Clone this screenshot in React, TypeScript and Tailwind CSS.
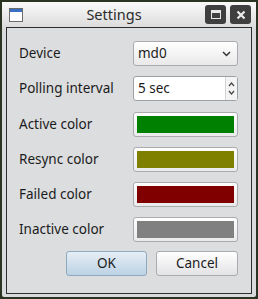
import React from 'react';

const font = { fontFamily: '"Noto Sans", "Open Sans", sans-serif' };

const swatches = [
  { label: 'Active color', color: 'bg-[#008000]' },
  { label: 'Resync color', color: 'bg-[#808000]' },
  { label: 'Failed color', color: 'bg-[#800000]' },
  { label: 'Inactive color', color: 'bg-[#808080]' },
];

const Row: React.FC<{ label: string; children: React.ReactNode; className?: string }> = ({ label, children, className }) => (
  <div className={`flex h-[25px] items-center justify-between ${className ?? ''}`}>
    <span className="text-[13.5px] text-[#1b1b1b]">{label}</span>
    {children}
  </div>
);

export default function App() {
  return (
    <div className="h-[299px] w-[258px] bg-[#2b3322] pl-[2px] pt-[2px]" style={font}>
      <div className="flex h-[295px] w-[254px] flex-col rounded-[2px] bg-[#d9dadc]">
        {/* title bar */}
        <div className="flex h-[25px] items-center bg-gradient-to-b from-[#fafafa] to-[#dcdcdc] pl-[7px] pr-[5px]">
          <div className="h-[14px] w-[14px] border border-[#6b6b6b] bg-white">
            <div className="h-[3px] bg-[#3a6fc4]" />
          </div>
          <span className="flex-1 text-center text-[14.5px] text-[#2a2a2a]">Settings</span>
          <div className="flex gap-[4px]">
            <div className="flex h-[19px] w-[21px] items-center justify-center rounded-[3px] bg-[#3f3f3f]">
              <div className="h-[9px] w-[10px] border-[1.5px] border-t-[3px] border-[#e8e8e8]" />
            </div>
            <div className="flex h-[19px] w-[21px] items-center justify-center rounded-[3px] bg-[#3f3f3f]">
              <svg width="10" height="10" viewBox="0 0 10 10">
                <path d="M1.5 1.5 L8.5 8.5 M8.5 1.5 L1.5 8.5" stroke="#ececec" strokeWidth="2.2" />
              </svg>
            </div>
          </div>
        </div>
        {/* content */}
        <div className="mx-[4px] mb-[3px] flex flex-1 flex-col border border-[#2e2e2e] bg-[#dcdddf] pl-[12px] pr-[13px] pt-[13px]">
          <Row label="Device">
            <div className="flex h-[25px] w-[105px] items-center justify-between rounded-[3px] border border-[#a9abae] bg-gradient-to-b from-white to-[#e9e9ea] pl-[4px] pr-[6px]">
              <span className="text-[13.5px] text-[#1b1b1b]">md0</span>
              <svg width="9" height="6" viewBox="0 0 9 6">
                <path d="M1 1 L4.5 4.5 L8 1" fill="none" stroke="#333" strokeWidth="1.5" />
              </svg>
            </div>
          </Row>
          <Row label="Polling interval" className="mt-[10px]">
            <div className="flex h-[25px] w-[105px] rounded-[3px] border border-[#9da0a4] bg-white">
              <span className="flex-1 pl-[4px] text-[13.5px] leading-[23px] text-[#1b1b1b]">5 sec</span>
              <div className="flex w-[12px] flex-col items-center justify-center gap-[3px] border-l border-[#d4d5d7] bg-[#f4f4f4]">
                <svg width="7" height="5" viewBox="0 0 7 5">
                  <path d="M1 4 L3.5 1 L6 4" fill="none" stroke="#444" strokeWidth="1.2" />
                </svg>
                <svg width="7" height="5" viewBox="0 0 7 5">
                  <path d="M1 1 L3.5 4 L6 1" fill="none" stroke="#444" strokeWidth="1.2" />
                </svg>
              </div>
            </div>
          </Row>
          {swatches.map((s, i) => (
            <Row key={s.label} label={s.label} className={i === 0 ? 'mt-[11px]' : 'mt-[10px]'}>
              <div className="flex h-[25px] w-[105px] rounded-[3px] border border-[#a9abae] bg-gradient-to-b from-white to-[#eaeaeb] p-[3px]">
                <div className={`flex-1 ${s.color}`} />
              </div>
            </Row>
          ))}
          <div className="mt-[9px] flex justify-end gap-[9px]">
            <button className="h-[25px] w-[81px] rounded-[3px] border border-[#8fa9c0] bg-gradient-to-b from-[#e6eef6] to-[#bcd2e4] text-[13.5px] text-[#1b1b1b]">
              OK
            </button>
            <button className="h-[25px] w-[82px] rounded-[3px] border border-[#a9abae] bg-gradient-to-b from-white to-[#e3e3e5] text-[13.5px] text-[#1b1b1b]">
              Cancel
            </button>
          </div>
        </div>
      </div>
    </div>
  );
}
